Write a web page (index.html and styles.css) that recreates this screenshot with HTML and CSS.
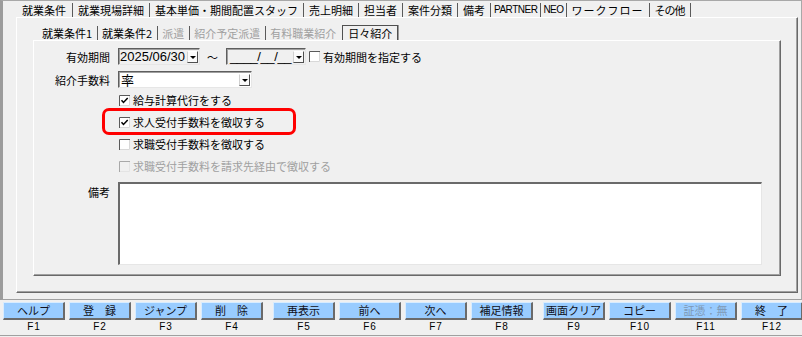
FILE: index.html
```html
<!DOCTYPE html>
<html lang="ja">
<head>
<meta charset="utf-8">
<title>就業条件</title>
<link rel="stylesheet" href="styles.css">
</head>
<body>
<div class="form">
  <div class="tabs outer-tabs">
    <span class="tab active">就業条件</span>
    <span class="tab">就業現場詳細</span>
    <span class="tab">基本単価・期間配置スタッフ</span>
    <span class="tab">売上明細</span>
    <span class="tab">担当者</span>
    <span class="tab">案件分類</span>
    <span class="tab">備考</span>
    <span class="tab latin p">PARTNER</span>
    <span class="tab latin n">NEO</span>
    <span class="tab wf">ワークフロー</span>
    <span class="tab sono">その他</span>
  </div>
  <div class="outer-panel">
    <div class="tabs inner-tabs">
      <span class="tab">就業条件1</span>
      <span class="tab">就業条件2</span>
      <span class="tab dis">派遣</span>
      <span class="tab dis">紹介予定派遣</span>
      <span class="tab dis last">有料職業紹介</span>
      <span class="tab sel">日々紹介</span>
    </div>
    <div class="inner-panel">
      <div class="row r1">
        <span class="lbl">有効期間</span>
        <div class="ctrls">
          <div class="combo date1"><span class="val">2025/06/30</span><span class="arrow"></span></div>
          <span class="tilde">～</span>
          <div class="combo date2"><span class="val">____/__/__</span><span class="arrow"></span></div>
          <svg class="cb cb-top" viewBox="0 0 11 11"><rect x="0" y="0" width="11" height="11" fill="#fff"/><path d="M0.5 11V0.5H11" stroke="#5a5a5a" fill="none"/><path d="M10.5 1V10.5H1" stroke="#d8d8d8" fill="none"/></svg>
          <span class="cbl">有効期間を指定する</span>
        </div>
      </div>
      <div class="row r2">
        <span class="lbl">紹介手数料</span>
        <div class="ctrls">
          <div class="combo select"><span class="val kanji">率</span><span class="arrow"></span></div>
        </div>
      </div>
      <div class="row cbrow first">
        <span></span>
        <div class="ctrls">
          <svg class="cb" viewBox="0 0 11 11"><rect x="0" y="0" width="11" height="11" fill="#fff"/><path d="M0.5 11V0.5H11" stroke="#5a5a5a" fill="none"/><path d="M10.5 1V10.5H1" stroke="#d8d8d8" fill="none"/><path d="M2.5 5.2L4.5 7.5L8.7 3" stroke="#000" stroke-width="1.5" fill="none"/></svg>
          <span class="cbl">給与計算代行をする</span>
        </div>
      </div>
      <div class="row cbrow">
        <span></span>
        <div class="ctrls hlwrap">
          <svg class="cb" viewBox="0 0 11 11"><rect x="0" y="0" width="11" height="11" fill="#fff"/><path d="M0.5 11V0.5H11" stroke="#5a5a5a" fill="none"/><path d="M10.5 1V10.5H1" stroke="#d8d8d8" fill="none"/><path d="M2.5 5.2L4.5 7.5L8.7 3" stroke="#000" stroke-width="1.5" fill="none"/></svg>
          <span class="cbl">求人受付手数料を徴収する</span>
          <span class="hl"></span>
        </div>
      </div>
      <div class="row cbrow">
        <span></span>
        <div class="ctrls">
          <svg class="cb" viewBox="0 0 11 11"><rect x="0" y="0" width="11" height="11" fill="#fff"/><path d="M0.5 11V0.5H11" stroke="#5a5a5a" fill="none"/><path d="M10.5 1V10.5H1" stroke="#d8d8d8" fill="none"/></svg>
          <span class="cbl">求職受付手数料を徴収する</span>
        </div>
      </div>
      <div class="row cbrow">
        <span></span>
        <div class="ctrls">
          <svg class="cb" viewBox="0 0 11 11"><rect x="0" y="0" width="11" height="11" fill="#f0f0f0"/><path d="M0.5 11V0.5H11" stroke="#a8a8a8" fill="none"/><path d="M10.5 1V10.5H1" stroke="#e4e4e4" fill="none"/></svg>
          <span class="cbl dis">求職受付手数料を請求先経由で徴収する</span>
        </div>
      </div>
      <div class="row memo-row">
        <span class="lbl memo-lbl">備考</span>
        <div class="memo"></div>
      </div>
    </div>
  </div>
</div>
<div class="fbar">
  <div class="fk"><div class="btn">ヘルプ</div><div class="fnum">F1</div></div>
  <div class="fk"><div class="btn">登　録</div><div class="fnum">F2</div></div>
  <div class="fk"><div class="btn">ジャンプ</div><div class="fnum">F3</div></div>
  <div class="fk"><div class="btn">削　除</div><div class="fnum">F4</div></div>
  <div class="fk grp"><div class="btn">再表示</div><div class="fnum">F5</div></div>
  <div class="fk"><div class="btn">前へ</div><div class="fnum">F6</div></div>
  <div class="fk"><div class="btn">次へ</div><div class="fnum">F7</div></div>
  <div class="fk"><div class="btn">補足情報</div><div class="fnum">F8</div></div>
  <div class="fk grp"><div class="btn">画面クリア</div><div class="fnum">F9</div></div>
  <div class="fk"><div class="btn">コピー</div><div class="fnum">F10</div></div>
  <div class="fk"><div class="btn off">証憑：無</div><div class="fnum">F11</div></div>
  <div class="fk"><div class="btn">終　了</div><div class="fnum">F12</div></div>
</div>
</body>
</html>
```
FILE: styles.css
```css
* { box-sizing: border-box; }
html, body { margin: 0; padding: 0; }
body {
  width: 802px;
  height: 337px;
  overflow: hidden;
  background: #f0f0f0;
  font-family: "Noto Sans CJK JP", "Noto Sans", sans-serif;
  font-size: 11px;
  color: #000;
}

/* window frame */
.form {
  height: 300px;
  border-left: 3px solid #9c9c9c;
  border-top: 1px solid #a8a8a8;
  border-right: 1px solid #a8a8a8;
  border-bottom: 1px solid #a0a0a0;
  padding: 0 3px 0 13px;
}

.tabs { display: flex; align-items: flex-end; }
.tab {
  height: 14px;
  line-height: 14px;
  padding: 0 5px;
  border-right: 1px solid #5a5a5a;
  white-space: nowrap;
}
.outer-tabs { height: 16px; padding-left: 1px; }
.outer-tabs .tab.active { padding-right: 6px; }
.outer-tabs .tab.latin {
  font-family: "Liberation Sans", Arial, sans-serif;
  font-size: 10px;
  letter-spacing: -0.5px;
}
.outer-tabs .tab.p { padding: 0 3px; }
.outer-tabs .tab.n { padding: 0 2px; }
.outer-tabs .tab.wf { letter-spacing: 1px; }
.outer-tabs .tab.sono { letter-spacing: -1px; }

.outer-panel {
  height: 276px;
  border-top: 1px solid #fff;
  border-left: 1px solid #fff;
  border-right: 1px solid #696969;
  border-bottom: 1px solid #696969;
  box-shadow: inset -1px -1px 0 #a0a0a0;
  padding: 0 16px 16px 16px;
  display: flex;
  flex-direction: column;
}

.inner-tabs { height: 22px; padding-left: 5px; flex: none; }
.inner-tabs .tab { padding: 0 5px 0 4px; }
.inner-tabs .tab.last { border-right: none; }
.inner-tabs .tab.sel {
  height: 15px;
  margin-left: 1px;
  padding: 0 5px;
  border: 1px solid #505050;
  border-bottom: none;
  box-shadow: 1px 0 0 #9a9a9a;
}
.tab.dis { color: #a0a0a0; }

.inner-panel {
  flex: 1;
  border-top: 1px solid #fff;
  border-left: 1px solid #fff;
  border-right: 1px solid #696969;
  border-bottom: 1px solid #696969;
  box-shadow: inset -1px -1px 0 #a0a0a0;
  padding-top: 7px;
}

.row {
  display: grid;
  grid-template-columns: 76px 1fr;
  column-gap: 8px;
  align-items: center;
}
.lbl { text-align: right; line-height: 14px; }
.ctrls { display: flex; align-items: center; }
.r1 { height: 17px; }
.r2 { height: 17px; margin-top: 6px; }
.cbrow { height: 22px; }
.cbrow.first { margin-top: 1px; }
.memo-row { margin-top: 5px; align-items: start; }
.memo-lbl { padding-top: 3px; }

/* combo boxes */
.combo {
  height: 17px;
  display: flex;
  align-items: center;
  justify-content: space-between;
  border: 1px solid;
  border-color: #5e5e5e #e6e6e6 #e6e6e6 #5e5e5e;
  box-shadow: inset 1px 1px 0 #a0a0a0;
  background: #f0f0f0;
}
.combo .val {
  font-family: "Liberation Sans", Arial, sans-serif;
  font-size: 13px;
  line-height: 15px;
  padding-left: 1px;
  white-space: nowrap;
}
.date1 { width: 82px; }
.date2 { width: 80px; }
.date2 .val { letter-spacing: -0.4px; padding-left: 3px; }
.select { width: 134px; background: #fff; }
.select .val.kanji {
  font-family: "Noto Sans CJK JP", sans-serif;
  font-size: 13px;
  padding-left: 2px;
}
.arrow {
  width: 11px;
  height: 12px;
  margin-right: 1px;
  background: #fafafa;
  border-top: 1px solid #fff;
  border-left: 1px solid #d0d0d0;
  border-right: 1px solid #505050;
  border-bottom: 1px solid #505050;
  display: flex;
  align-items: center;
  justify-content: center;
}
.arrow::after {
  content: "";
  width: 0;
  height: 0;
  margin-top: 2px;
  border-left: 3px solid transparent;
  border-right: 3px solid transparent;
  border-top: 3px solid #000;
}
.tilde { margin: 0 8px 0 7px; font-size: 11px; }

/* checkboxes */
.cb { width: 11px; height: 11px; flex: none; margin-left: 1px; }
.cb.cb-top { margin-left: 3px; }
.cbl { margin-left: 3px; line-height: 14px; white-space: nowrap; }
.cbl.dis { color: #a0a0a0; }

.hlwrap { position: relative; height: 22px; }
.hl {
  position: absolute;
  left: -16px;
  top: -3px;
  width: 194px;
  height: 27px;
  border: 3px solid #ff0000;
  border-radius: 7px;
}

.memo {
  width: 644px;
  height: 83px;
  background: #fff;
  border-top: 2px solid #6a6a6a;
  border-left: 2px solid #6a6a6a;
  border-right: 1px solid #e6e6e6;
  border-bottom: 1px solid #e6e6e6;
}

/* function key bar */
.fbar {
  height: 36px;
  display: flex;
  padding: 2px 0 0 3px;
  border-bottom: 1px solid #a0a0a0;
}
.fk {
  width: 62px;
  flex: none;
  margin-right: 4px;
  display: flex;
  flex-direction: column;
}
.fk.grp { margin-left: 6px; }
.btn {
  height: 18px;
  background: #99ccff;
  border-top: 1px solid #d8ecff;
  border-left: 1px solid #d8ecff;
  border-right: 2px solid #6a6a6a;
  border-bottom: 2px solid #6a6a6a;
  text-align: center;
  line-height: 15px;
  color: #101020;
  white-space: nowrap;
}
.btn.off { color: #7d97b3; }
.fnum {
  height: 14px;
  line-height: 14px;
  text-align: center;
  font-family: "Liberation Sans", Arial, sans-serif;
  font-size: 10px;
  letter-spacing: 1px;
}
```
